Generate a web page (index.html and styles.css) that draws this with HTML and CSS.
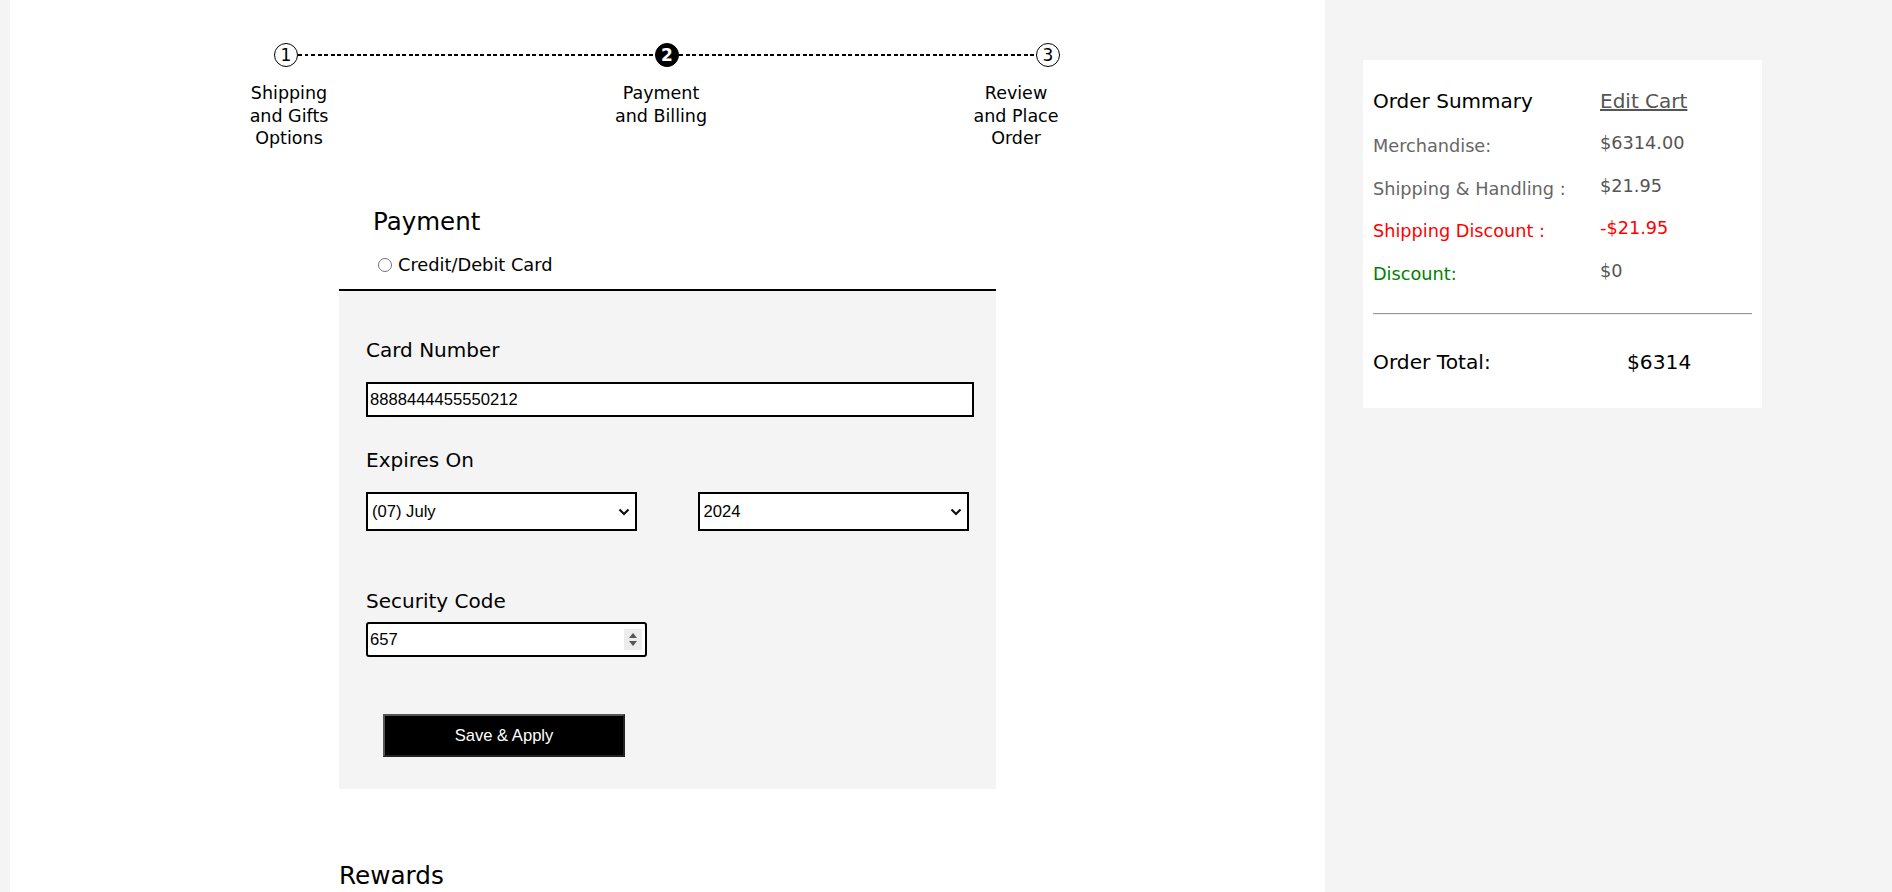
FILE: index.html
```html
<!DOCTYPE html>
<html lang="en">
<head>
<meta charset="utf-8">
<title>Checkout - Payment and Billing</title>
<link rel="stylesheet" href="styles.css">
</head>
<body>
<div class="page">
  <main class="main">
    <div class="stepper">
      <div class="track">
        <span class="step-dot">1</span>
        <span class="step-line"></span>
        <span class="step-dot active">2</span>
        <span class="step-line"></span>
        <span class="step-dot">3</span>
      </div>
      <div class="step-labels">
        <div class="step-label l1">Shipping<br>and Gifts<br>Options</div>
        <div class="step-label l2">Payment<br>and Billing</div>
        <div class="step-label l3">Review<br>and Place<br>Order</div>
      </div>
    </div>

    <section class="payment">
      <h2 class="pay-title">Payment</h2>
      <label class="method"><input type="radio" name="method" class="radio"> Credit/Debit Card</label>
      <div class="panel">
        <div class="field-label">Card Number</div>
        <input class="text-input card-input" type="text" value="8888444455550212">
        <div class="field-label expires">Expires On</div>
        <div class="select-row">
          <div class="select-wrap">
            <select class="select-input">
              <option>(07) July</option>
            </select>
            <svg class="chev" width="12" height="8" viewBox="0 0 12 8"><path d="M1.5 1.5 L6 6 L10.5 1.5" fill="none" stroke="#111" stroke-width="2.2"/></svg>
          </div>
          <div class="select-wrap wide">
            <select class="select-input">
              <option>2024</option>
            </select>
            <svg class="chev" width="12" height="8" viewBox="0 0 12 8"><path d="M1.5 1.5 L6 6 L10.5 1.5" fill="none" stroke="#111" stroke-width="2.2"/></svg>
          </div>
        </div>
        <div class="field-label security">Security Code</div>
        <div class="code-wrap">
          <input class="text-input code-input" type="number" value="657">
          <span class="spinner"><span class="tri-up"></span><span class="tri-down"></span></span>
        </div>
        <button class="apply-btn" type="button">Save &amp; Apply</button>
      </div>
      <h2 class="rewards">Rewards</h2>
    </section>
  </main>

  <aside class="sidebar">
    <div class="summary">
      <div class="sum-head">
        <span class="sum-title">Order Summary</span>
        <a class="edit-cart" href="#">Edit Cart</a>
      </div>
      <div class="sum-rows">
        <div class="sum-row"><span class="sum-label">Merchandise:</span><span class="sum-value">$6314.00</span></div>
        <div class="sum-row"><span class="sum-label">Shipping &amp; Handling :</span><span class="sum-value">$21.95</span></div>
        <div class="sum-row red"><span class="sum-label">Shipping Discount :</span><span class="sum-value">-$21.95</span></div>
        <div class="sum-row"><span class="sum-label green">Discount:</span><span class="sum-value">$0</span></div>
      </div>
      <hr class="sum-rule">
      <div class="sum-total">
        <span class="total-label">Order Total:</span>
        <span class="total-value">$6314</span>
      </div>
    </div>
  </aside>
</div>
</body>
</html>
```

FILE: styles.css
```css
html, body {
  margin: 0;
  padding: 0;
}
body {
  background: #f4f4f4;
  font-family: "DejaVu Sans", Verdana, sans-serif;
  color: #000;
  overflow: hidden;
}
.page {
  display: flex;
  padding-left: 10px;
  min-height: 892px;
}
.main {
  width: 1315px;
  flex: none;
  background: #fff;
}
.sidebar {
  flex: 1;
  padding: 60px 0 0 38px;
}

/* stepper */
.stepper {
  padding-top: 43px;
}
.track {
  display: flex;
  align-items: center;
  margin-left: 264px;
  width: 786px;
}
.step-dot {
  flex: none;
  width: 24px;
  height: 24px;
  box-sizing: border-box;
  border: 1px solid #000;
  border-radius: 50%;
  font-size: 17px;
  line-height: 22px;
  text-align: center;
  background: #fff;
}
.step-dot.active {
  background: #000;
  color: #fff;
  font-weight: bold;
}
.step-line {
  flex: 1;
  height: 2px;
  background: repeating-linear-gradient(to right, #000 0 4px, transparent 4px 6.5px);
}
.step-labels {
  display: flex;
  margin-top: 15px;
}
.step-label {
  width: 120px;
  flex: none;
  text-align: center;
  font-size: 17.5px;
  line-height: 22.5px;
}
.l1 { margin-left: 219px; }
.l2 { margin-left: 252px; }
.l3 { margin-left: 235px; }

/* payment */
.payment {
  margin-left: 329px;
  width: 657px;
}
.pay-title {
  margin: 58.5px 0 0;
  padding-left: 34px;
  font-size: 24.5px;
  line-height: 28px;
  font-weight: normal;
}
.method {
  display: flex;
  align-items: center;
  margin-top: 17.5px;
  padding: 0 0 13.5px 39px;
  border-bottom: 2px solid #000;
  font-size: 17.8px;
  line-height: 22px;
}
.radio {
  width: 14px;
  height: 14px;
  margin: 0 6px 0 0;
  accent-color: #555;
}
.panel {
  background: #f4f4f4;
  padding: 47px 27px 32px;
}
.field-label {
  font-size: 20px;
  line-height: 24px;
}
.expires { margin-top: 31px; }
.security { margin-top: 58px; }
.text-input {
  display: block;
  box-sizing: border-box;
  height: 35px;
  border: 2px solid #000;
  background: #fff;
  font-family: "Liberation Sans", Arial, sans-serif;
  font-size: 16.6px;
  color: #000;
  padding: 0 2px;
  outline: none;
}
.card-input {
  width: 608px;
  margin-top: 20px;
  border-radius: 0;
}
.code-wrap {
  position: relative;
  width: 281px;
  margin-top: 9px;
}
.code-input {
  width: 281px;
  border-radius: 3px;
  -moz-appearance: textfield;
}
.code-input::-webkit-inner-spin-button,
.code-input::-webkit-outer-spin-button {
  -webkit-appearance: none;
  margin: 0;
}
.spinner {
  position: absolute;
  right: 5px;
  top: 7px;
  width: 18px;
  height: 21px;
  background: #ececec;
}
.tri-up,
.tri-down {
  position: absolute;
  left: 5px;
  width: 0;
  height: 0;
  border-left: 4px solid transparent;
  border-right: 4px solid transparent;
}
.tri-up {
  top: 4px;
  border-bottom: 5px solid #555;
}
.tri-down {
  bottom: 4px;
  border-top: 5px solid #555;
}
.select-row {
  display: flex;
  gap: 61px;
  margin-top: 20px;
}
.select-wrap {
  position: relative;
  width: 271px;
}
.select-wrap.wide {
  width: 272px;
}
.select-input {
  display: block;
  box-sizing: border-box;
  width: 100%;
  height: 39px;
  border: 2px solid #000;
  border-radius: 0;
  background: #fff;
  font-family: "Liberation Sans", Arial, sans-serif;
  font-size: 16.6px;
  color: #000;
  padding: 0 4px;
  -webkit-appearance: none;
  appearance: none;
}
.chev {
  position: absolute;
  right: 7px;
  top: 16px;
  pointer-events: none;
}
.apply-btn {
  display: block;
  box-sizing: border-box;
  width: 242px;
  height: 43px;
  margin: 57px 0 0 17px;
  background: #000;
  color: #fff;
  border: 2px solid #555;
  border-right-color: #222;
  border-bottom-color: #222;
  font-family: "Liberation Sans", Arial, sans-serif;
  font-size: 16.6px;
  padding: 0;
}
.rewards {
  margin: 71.5px 0 0;
  font-size: 24.7px;
  line-height: 29px;
  font-weight: normal;
}

/* summary */
.summary {
  box-sizing: border-box;
  width: 399px;
  background: #fff;
  padding: 29px 10px 34px;
}
.sum-head {
  display: flex;
  font-size: 20px;
  line-height: 24px;
}
.sum-title {
  width: 227px;
  flex: none;
}
.edit-cart {
  color: #555;
  text-decoration: underline;
}
.sum-rows {
  margin-top: 10.5px;
}
.sum-row {
  display: flex;
  align-items: center;
  height: 42.7px;
  color: #666;
}
.sum-label {
  width: 227px;
  flex: none;
  font-size: 17.7px;
  line-height: 20px;
  padding-top: 2px;
}
.sum-value {
  font-size: 17.7px;
  line-height: 20px;
  padding-bottom: 4px;
  color: #555;
}
.sum-row.red,
.sum-row.red .sum-value {
  color: #f00;
}
.green {
  color: #008000;
}
.sum-rule {
  margin: 19px 0 0;
  height: 0;
  border: 0;
  border-top: 1px solid #999;
  border-bottom: 1px solid #eee;
}
.sum-total {
  display: flex;
  margin-top: 35px;
  font-size: 20.2px;
  line-height: 24px;
}
.total-label {
  width: 254px;
  flex: none;
}
```
